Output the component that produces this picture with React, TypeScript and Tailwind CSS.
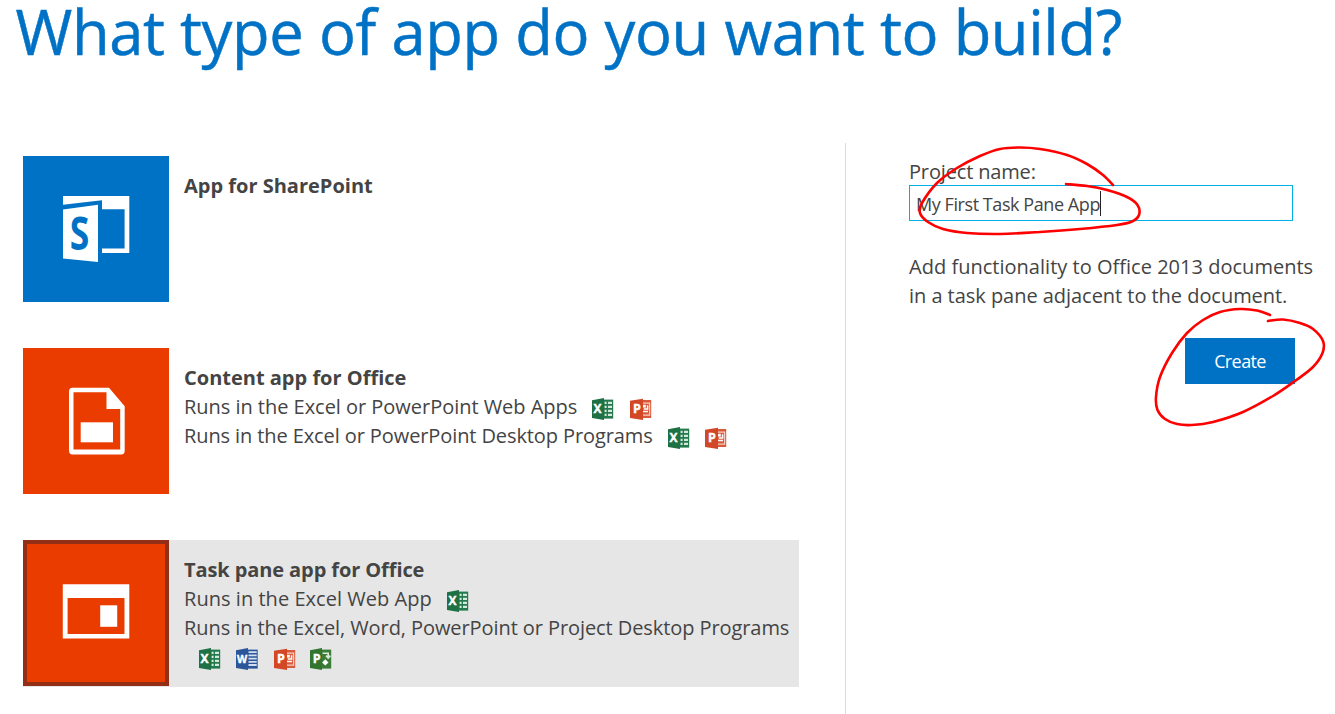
import type { ReactNode } from "react";

type Point = [number, number];

const NAME_LOOP: Point[] = [
  [1113, 185], [1103, 175], [1087, 164], [1067, 155], [1040, 149], [1020, 147.5], [1000, 149], [980, 156],
  [957, 168], [937, 183], [922, 203], [920, 213], [928, 222], [943, 229], [967, 233], [1000, 234],
  [1040, 232], [1080, 229], [1117, 225], [1132, 221.5], [1139, 215], [1137.5, 205], [1127, 197], [1107, 190],
  [1087, 186], [1066, 184],
];

const CREATE_LOOP: Point[] = [
  [1270, 315], [1257, 310.5], [1240, 309], [1220, 312], [1203, 320], [1187, 333], [1172, 353], [1160, 377],
  [1156, 397], [1157.5, 410], [1165, 419], [1177, 424], [1192, 425], [1213, 422], [1243, 412], [1273, 396],
  [1295, 381], [1313, 367], [1322.5, 353], [1323, 341], [1313, 329], [1300, 323], [1283, 319.5], [1268, 321],
];

function smoothPath(points: Point[]) {
  let d = `M${points[0][0]} ${points[0][1]}`;
  for (let i = 0; i < points.length - 1; i++) {
    const a = points[Math.max(i - 1, 0)];
    const b = points[i];
    const c = points[i + 1];
    const e = points[Math.min(i + 2, points.length - 1)];
    d += ` C${b[0] + (c[0] - a[0]) / 6} ${b[1] + (c[1] - a[1]) / 6} ${c[0] - (e[0] - b[0]) / 6} ${c[1] - (e[1] - b[1]) / 6} ${c[0]} ${c[1]}`;
  }
  return d;
}

interface ProgramIconProps {
  letter: string;
  color: string;
  size: number;
  x?: number;
  panel?: string;
  children: ReactNode;
}

function ProgramIcon({ letter, color, size, x = 5.6, panel = "M0 2.2 12 0v22L0 20Z", children }: ProgramIconProps) {
  return (
    <svg width="22" height="22" viewBox="0 0 22 22" className="shrink-0">
      {children}
      <path d={panel} fill={color} />
      <text x={x} y="15.3" textAnchor="middle" fontSize={size} fontWeight="700" fontFamily="Open Sans, sans-serif" fill="#fff" stroke="#fff" strokeWidth="0.4">
        {letter}
      </text>
    </svg>
  );
}

function ExcelIcon() {
  return (
    <ProgramIcon letter="X" color="#1e7145" size={12}>
      <rect x="11.5" y="1.6" width="9.7" height="19" fill="#237a4c" />
      <path d="M12.6 4.9h2M12.6 8.9h2M12.6 12.9h2M12.6 16.9h2M16 4.9h4M16 8.9h4M16 12.9h4M16 16.9h4" stroke="#d5e8dd" strokeWidth="2.2" />
    </ProgramIcon>
  );
}

function WordIcon() {
  return (
    <ProgramIcon letter="W" color="#2b579a" size={10.5} x={6}>
      <rect x="11.5" y="1.6" width="10.2" height="19" fill="#2b579a" />
      <path d="M12.5 4.2h8.2M12.5 7.4h8.2M12.5 10.6h8.2M12.5 13.8h8.2M12.5 17h8.2" stroke="#d3deee" strokeWidth="1.8" />
    </ProgramIcon>
  );
}

function PowerPointIcon() {
  return (
    <ProgramIcon letter="P" color="#d24726" size={12.5} x={7} panel="M0 2.8 13 .8V22L0 20Z">
      <rect x="12" y="2" width="9.2" height="18" fill="#d9593b" />
      <path d="M13 5.2h6.6v11.9H13" fill="none" stroke="#f6cfc4" strokeWidth="1.2" />
      <path d="M13 13.6h5M17.6 7.2v3.7h-3.8" fill="none" stroke="#fff" strokeWidth="1.5" />
      <path d="M13 6.8h2.8v2.8H13Z" fill="#fff" />
    </ProgramIcon>
  );
}

function ProjectIcon() {
  return (
    <ProgramIcon letter="P" color="#31752f" size={12.5} x={6.6}>
      <rect x="11.5" y="1.6" width="9.7" height="19" fill="#3a7c38" />
      <path d="M12.6 5.2h5.6v3.4M16 7.6l2.2 2.4 2.2-2.4" fill="none" stroke="#dcebdb" strokeWidth="1.6" />
      <path d="m15.3 11.2 3.2 3.2-3.2 3.2-3.2-3.2Z" fill="#fff" />
    </ProgramIcon>
  );
}

function SharePointGlyph() {
  return (
    <svg width="146" height="146" viewBox="0 0 146 146" fill="#fff">
      <path fillRule="evenodd" d="M40 40h66.3v57H79v-4.6h22.6V53.3H79V44.2L40 48.7Z" />
      <path d="M40 53.5 75 48.8v57.3L40 102.5Z" />
      <text x="56.4" y="93.6" textAnchor="middle" fontSize="46" fontWeight="700" fontFamily="Open Sans, sans-serif" fill="#0072c6" textLength="19.5" lengthAdjust="spacingAndGlyphs">
        S
      </text>
    </svg>
  );
}

function ContentGlyph() {
  return (
    <svg width="146" height="146" viewBox="0 0 146 146" fill="#fff">
      <path
        fillRule="evenodd"
        d="M49.5 39.7H86l15.7 18.6v44.5q0 3.7-3.5 3.7H49.5q-3.5 0-3.5-3.7V43.2q0-3.5 3.5-3.5ZM50.5 44.3v57.2h46.7V61H83.5V44.3Z"
      />
      <rect x="57.7" y="74.3" width="32.3" height="20" />
    </svg>
  );
}

function TaskPaneGlyph() {
  return (
    <svg width="138" height="138" viewBox="4 4 138 138" fill="#fff">
      <path fillRule="evenodd" d="M39.8 44.2h66.5v54.4H39.8ZM44.6 58v36h56.9V58Z" />
      <rect x="77.2" y="65.3" width="17" height="21.5" />
    </svg>
  );
}

export default function App() {
  return (
    <div className="relative flex h-[714px] w-[1335px] flex-col bg-white font-['Open_Sans',sans-serif] text-[20px] leading-[29px] text-[#444]">
      <h1 className="h-[143px] shrink-0 pl-[15.5px] text-[61.5px] leading-[63px] tracking-[-0.4px] whitespace-nowrap text-[#0072c6] [-webkit-text-stroke:0.5px_#0072c6]">
        What type of app do you want to build?
      </h1>
      <div className="flex flex-1">
        <main className="flex w-[845px] shrink-0 flex-col gap-[46px] pt-[13px] pl-[23px] whitespace-nowrap">
          <section className="flex h-[146px] w-[776px]">
            <div className="size-[146px] shrink-0 bg-[#0072c6]">
              <SharePointGlyph />
            </div>
            <div className="pt-[15px] pl-[15px]">
              <h2 className="font-bold">App for SharePoint</h2>
            </div>
          </section>

          <section className="flex h-[146px] w-[776px]">
            <div className="size-[146px] shrink-0 bg-[#eb3c00]">
              <ContentGlyph />
            </div>
            <div className="pt-[15px] pl-[15px]">
              <h2 className="font-bold">Content app for Office</h2>
              <div className="flex h-[29px] items-start">
                <span className="w-[393px] tracking-[-0.03px]">Runs in the Excel or PowerPoint Web Apps</span>
                <div className="flex gap-4 pt-[6px] pl-[15px]">
                  <ExcelIcon />
                  <PowerPointIcon />
                </div>
              </div>
              <div className="flex h-[29px] items-start">
                <span className="w-[469px] tracking-[-0.1px]">Runs in the Excel or PowerPoint Desktop Programs</span>
                <div className="flex gap-[15px] pt-[6px] pl-[15px]">
                  <ExcelIcon />
                  <PowerPointIcon />
                </div>
              </div>
            </div>
          </section>

          <section className="flex h-[147px] w-[776px] bg-[#e6e6e6]">
            <div className="size-[146px] shrink-0 border-4 border-[#942f17] bg-[#eb3c00]">
              <TaskPaneGlyph />
            </div>
            <div className="pt-[15px] pl-[15px]">
              <h2 className="font-bold tracking-[-0.1px]">Task pane app for Office</h2>
              <div className="flex h-[29px] items-start">
                <span className="w-[248px] tracking-[0.04px]">Runs in the Excel Web App</span>
                <div className="flex pt-[6px] pl-[15px]">
                  <ExcelIcon />
                </div>
              </div>
              <p className="tracking-[-0.08px]">Runs in the Excel, Word, PowerPoint or Project Desktop Programs</p>
              <div className="flex gap-[15px] pt-[6px] pl-[15px]">
                <ExcelIcon />
                <WordIcon />
                <div className="-mr-px ml-px">
                  <PowerPointIcon />
                </div>
                <ProjectIcon />
              </div>
            </div>
          </section>
        </main>

        <aside className="flex flex-1 flex-col border-l border-[#dcdcdc] pt-[14px] pl-[63px] whitespace-nowrap">
          <label className="h-7 tracking-[-0.16px]">Project name:</label>
          <div className="flex h-9 w-[384px] items-center border border-[#00b0e6] pt-[2px] pl-[6px]">
            <span className="text-[18px] tracking-[-0.43px]">My First Task Pane App</span>
            <span className="-mt-[2px] h-[25px] w-px bg-[#222]" />
          </div>
          <p className="mt-[31px]">
            <span className="tracking-[0.02px]">Add functionality to Office 2013 documents</span>
            <br />
            <span className="tracking-[-0.04px]">in a task pane adjacent to the document.</span>
          </p>
          <button className="mt-7 ml-[276px] h-[46px] w-[110px] bg-[#0072c6] text-[18px] tracking-[-0.6px] text-white">
            Create
          </button>
        </aside>
      </div>

      <svg className="pointer-events-none absolute inset-0" width="1335" height="714" fill="none" stroke="#f00" strokeWidth="2.6" strokeLinecap="round">
        <path d={smoothPath(NAME_LOOP)} />
        <path d={smoothPath(CREATE_LOOP)} />
      </svg>
    </div>
  );
}
